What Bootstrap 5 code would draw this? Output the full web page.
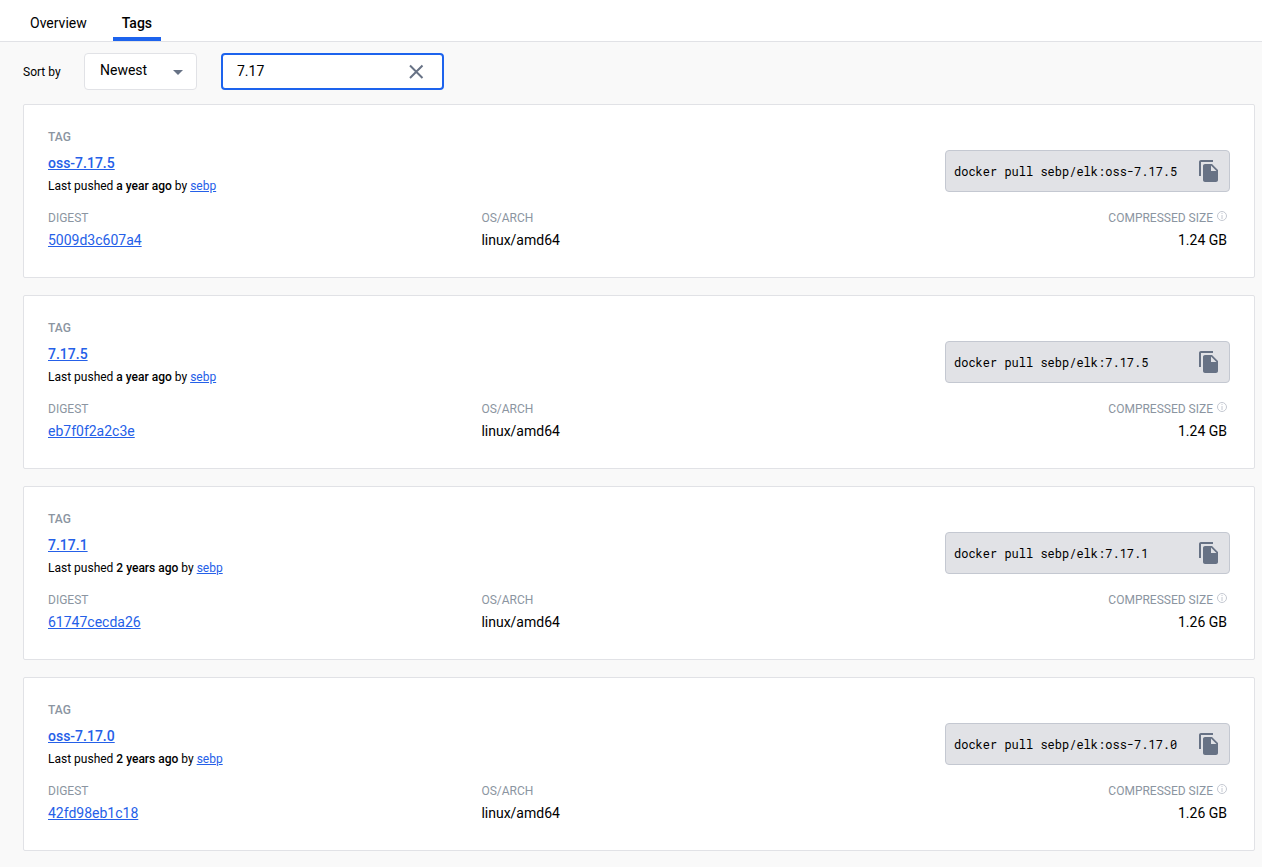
<!DOCTYPE html>
<html lang="en">
<head>
<meta charset="utf-8">
<meta name="viewport" content="width=device-width, initial-scale=1">
<title>sebp/elk tags</title>
<link rel="stylesheet" href="https://cdn.jsdelivr.net/npm/bootstrap@5.3.0/dist/css/bootstrap.min.css">
<style>
  body { font-family: Roboto, "Liberation Sans", sans-serif; font-size: 14px; line-height: 20px; color: #000; background: #f9f9f9; }
  a { color: #2560e8; }
  .page-tabs { background: #fff; border-bottom: 1px solid #e1e2e6; padding-left: 22px; column-gap: 18px; }
  .page-tabs .nav-link { color: #000; padding: 13px 8px 4px; border-bottom: 4px solid transparent; }
  .page-tabs .nav-link.active { font-weight: 500; padding-left: 9px; padding-right: 9px; border-bottom-color: #1d63ed; }
  .page-body { padding: 11px 7px 16px 23px; }
  .sort-label, .caption, .pushed { font-size: 12px; line-height: 16px; }
  .sort-label { width: 61px; }
  .sort-select { appearance: none; width: 113px; height: 37px; padding: 0 15px 3px; font-size: 14px; color: #000; border: 1px solid #e1e2e6; border-radius: 4px;
    background: #fff url("data:image/svg+xml,%3Csvg xmlns='http://www.w3.org/2000/svg' viewBox='0 0 10 5'%3E%3Cpath d='M0 0h10L5 5z' fill='%23677285'/%3E%3C/svg%3E") no-repeat right 13px top 16px / 10px 5px; }
  .filter-box { width: 223px; margin-left: 24px; }
  .filter-box .form-control { height: 37px; padding: 0 40px 1px 14px; font-size: 14px; color: #000; border: 2px solid #1d63ed; border-radius: 4px; }
  .filter-clear { right: 18px; top: 8px; width: 20px; height: 20px; }
  .tag-list { gap: 17px; margin-top: 14px; }
  .tag-card { border: 1px solid #e1e2e6; border-radius: 2px; padding: 24px 24px 27px; }
  .caption { color: #8b95a1; }
  .tag-caption, .tag-name, .pushed strong { font-weight: 500; }
  .tag-name { margin-top: 8px; }
  .pushed { margin-top: 5px; }
  .pull-box { width: 285px; height: 42px; margin-top: 21px; padding: 0 8px; background: #e1e2e6; border: 1px solid #c4c8d1; border-radius: 4px; }
  .pull-box code { font-family: "Roboto Mono", "Liberation Mono", monospace; font-size: 12px; color: #000; }
  .details { grid-template-columns: 11fr 13fr 6fr; margin-top: 16px; }
  .detail-value { margin-top: 4px; }
  .size-col { padding-right: 3px; }
  .info-icon { margin-top: 1px; }
</style>
</head>
<body>
<svg class="d-none" aria-hidden="true">
  <symbol id="copy" viewBox="0 0 24 24"><path fill="#677285" d="M16 1H4C2.900 1 2 1.900 2 3v14h2V3h12V1zm-1 4l6 6v10c0 1.100-.9 2-2 2H8c-1.100 0-2-.9-2-2V7c0-1.100.9-2 2-2h7zm-1 7h5.500L14 6.500V12z"/></symbol>
  <symbol id="info" viewBox="0 0 10 10"><circle cx="5" cy="5" r="4.500" fill="none" stroke="#c4c8d1"/><path d="M5 2v1M5 4v4" stroke="#c4c8d1"/></symbol>
</svg>

<nav class="page-tabs nav flex-nowrap">
  <a class="nav-link" href="#overview">Overview</a>
  <a class="nav-link active" href="#tags" aria-current="page">Tags</a>
</nav>

<main class="page-body">
  <form class="d-flex align-items-center">
    <label class="sort-label" for="sort">Sort by</label>
    <select class="sort-select" id="sort"><option>Newest</option><option>Oldest</option></select>
    <div class="filter-box position-relative">
      <input class="form-control" type="text" value="7.17" aria-label="Filter tags">
      <button class="filter-clear btn p-0 border-0 position-absolute d-flex" type="button" aria-label="Clear filter">
        <svg width="20" height="20" viewBox="0 0 20 20"><path d="M4 4.500l12.500 12.500M16.500 4.500L4 17" fill="none" stroke="#677285" stroke-width="2"/></svg>
      </button>
    </div>
  </form>

  <div class="tag-list d-flex flex-column" id="tags">
  </div>
</main>

<template id="tag-template">
  <article class="tag-card bg-white">
    <div class="d-flex justify-content-between align-items-start">
      <div>
        <div class="caption tag-caption">TAG</div>
        <div class="tag-name"><a href="#" data-f="name"></a></div>
        <div class="pushed">Last pushed <strong data-f="age"></strong> by <a href="#">sebp</a></div>
      </div>
      <div class="pull-box d-flex align-items-center justify-content-between">
        <code data-f="cmd"></code>
        <button class="btn p-0 border-0 d-flex" type="button" aria-label="Copy command"><svg width="24" height="24"><use href="#copy"/></svg></button>
      </div>
    </div>
    <div class="details d-grid">
      <div><div class="caption">DIGEST</div><div class="detail-value"><a href="#" data-f="digest"></a></div></div>
      <div><div class="caption">OS/ARCH</div><div class="detail-value">linux/amd64</div></div>
      <div class="size-col text-end">
        <div class="caption d-flex justify-content-end gap-1">COMPRESSED SIZE <svg class="info-icon" width="10" height="10"><use href="#info"/></svg></div>
        <div class="detail-value" data-f="size"></div>
      </div>
    </div>
  </article>
</template>

<script src="https://cdn.jsdelivr.net/npm/bootstrap@5.3.0/dist/js/bootstrap.bundle.min.js"></script>
<script>
  const tags = [
    { name: "oss-7.17.5", age: "a year ago", digest: "5009d3c607a4", size: "1.24 GB" },
    { name: "7.17.5", age: "a year ago", digest: "eb7f0f2a2c3e", size: "1.24 GB" },
    { name: "7.17.1", age: "2 years ago", digest: "61747cecda26", size: "1.26 GB" },
    { name: "oss-7.17.0", age: "2 years ago", digest: "42fd98eb1c18", size: "1.26 GB" }
  ];
  const list = document.getElementById("tags");
  for (const tag of tags) {
    const card = document.getElementById("tag-template").content.cloneNode(true);
    const values = { ...tag, cmd: "docker pull sebp/elk:" + tag.name };
    card.querySelectorAll("[data-f]").forEach(el => { el.textContent = values[el.dataset.f]; });
    list.append(card);
  }
</script>
</body>
</html>
